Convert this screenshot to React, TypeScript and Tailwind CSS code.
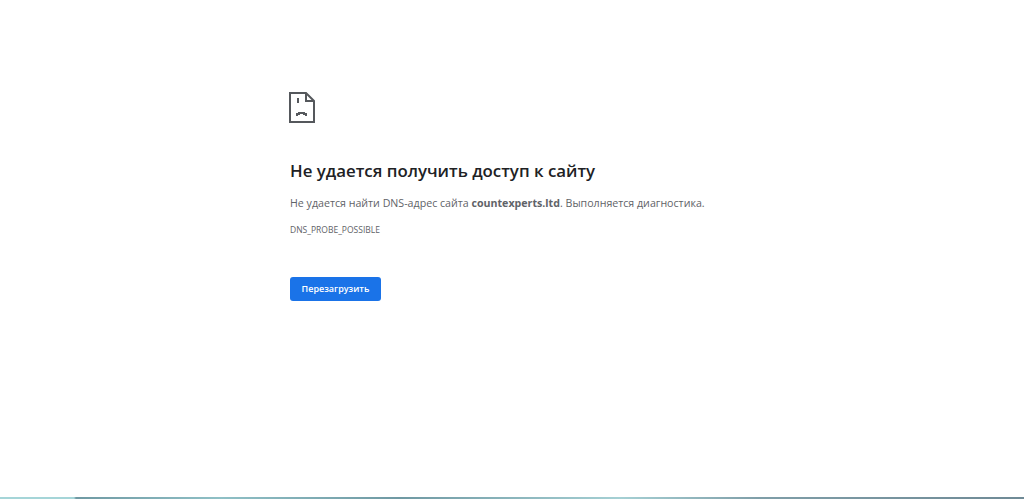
export default function App() {
  return (
    <div className="h-[499px] w-[1024px] flex flex-col bg-white overflow-hidden font-['Open_Sans',sans-serif]">
      <div className="flex-1 pl-[290px] pt-[91px]">
        {/* sad tab icon */}
        <svg width="26" height="32" viewBox="0 0 26 32" className="block -ml-px text-[#55585c]" fill="none" stroke="currentColor" strokeWidth="2">
          <path d="M1 2H17L25 10V31H1Z" />
          <path d="M17 2V10H25" />
          <path d="M9 7V12" />
          <path d="M8 25V23H10V22H15V23H17V25" />
        </svg>

        <h1 className="mt-[35px] text-[16.85px] leading-[26px] font-semibold text-[#202124]">Не удается получить доступ к сайту</h1>
        <p className="mt-[11px] text-[10.65px] leading-[16px] text-[#5f6368]">
          Не удается найти DNS-адрес сайта <b className="font-bold">countexperts.ltd</b>. Выполняется диагностика.
        </p>
        <div className="mt-[13px] text-[8.5px] leading-[12px] text-[#5f6368]">DNS_PROBE_POSSIBLE</div>

        <button className="block mt-[41px] w-[91px] h-[24px] rounded-[3px] bg-[#1a73e8] text-white text-[9px] font-semibold">
          Перезагрузить
        </button>
      </div>
      <div className="h-[2px] bg-[linear-gradient(90deg,#a5d5d8_0,#a5d5d8_74px,#6f99a3_76px,#8fc0c6_220px,#6f99a3_400px,#a5d0d4_620px,#7f9ea8_760px,#6f8a96_1024px)]" />
    </div>
  );
}
